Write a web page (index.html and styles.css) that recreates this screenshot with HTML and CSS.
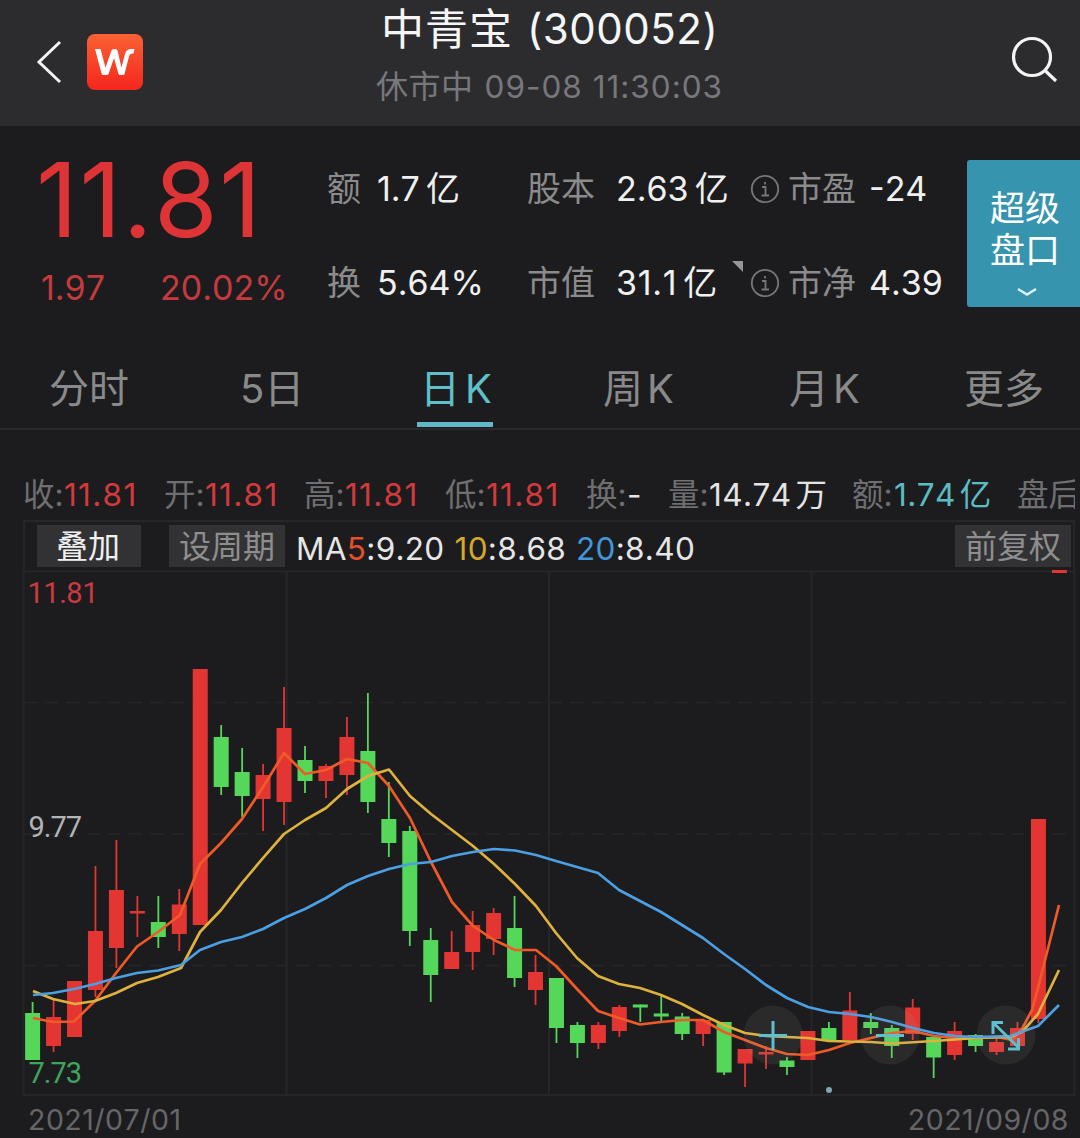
FILE: index.html
```html
<!DOCTYPE html>
<html lang="zh-CN">
<head>
<meta charset="utf-8">
<title>中青宝 (300052)</title>
<link rel="stylesheet" href="styles.css">
</head>
<body>
<header class="topbar">
  <div class="nav">
    <svg class="back" width="28" height="48" viewBox="0 0 28 48"><path d="M25 4 4 24 25 44"/></svg>
    <svg class="logo" width="56" height="56" viewBox="0 0 56 56">
      <defs><linearGradient id="lg" x1="0" y1="0" x2="0" y2="1"><stop offset="0" stop-color="#fb6235"/><stop offset="1" stop-color="#f4261d"/></linearGradient></defs>
      <rect width="56" height="56" rx="8" fill="url(#lg)"/>
      <path d="M8 15H13.500L18.500 33.500 24.500 16.500Q25 15 27 15H28.500Q30 15 30.500 16.500L34.500 33.500 38 20Q39.500 15 44 15H47.500L46.500 19.500Q42.800 19 42 22.500L37.500 40Q37.200 41 36 41H33Q31.800 41 31.500 40L27 24 21.500 40Q21 41 20 41H16Q15 41 14.700 40Z" fill="#fff"/>
    </svg>
  </div>
  <div class="heading">
    <h1 class="title"><span class="title-name">中青宝</span><span class="title-code">(300052)</span></h1>
    <div class="status"><span class="status-name">休市中</span><span class="status-time">09-08 11:30:03</span></div>
  </div>
  <svg class="search" width="48" height="48" viewBox="0 0 48 48"><circle cx="21" cy="22" r="18.500"/><path d="M34 35.500 45 46"/></svg>
</header>

<section class="quote">
  <div class="price-box">
    <div class="price">11.81</div>
    <div class="change"><span class="diff">1.97</span><span class="pct">20.02%</span></div>
  </div>
  <div class="metrics">
    <span class="label">额</span><span class="value">1.7<i>亿</i></span>
    <span class="label">股本</span><span class="value">2.63<i>亿</i></span>
    <svg class="info" width="30" height="30" viewBox="0 0 30 30"><circle cx="15" cy="15" r="13.200"/><path d="M12 13H15.500V21M11.500 21.500H19M15 8V10.500"/></svg>
    <span class="label">市盈</span><span class="value">-24</span>
    <span class="label">换</span><span class="value">5.64%</span>
    <span class="label">市值</span><span class="value corner">31.1<i>亿</i></span>
    <svg class="info" width="30" height="30" viewBox="0 0 30 30"><circle cx="15" cy="15" r="13.200"/><path d="M12 13H15.500V21M11.500 21.500H19M15 8V10.500"/></svg>
    <span class="label">市净</span><span class="value">4.39</span>
  </div>
  <div class="depth">
    <span>超级</span><span>盘口</span>
    <svg width="22" height="12" viewBox="0 0 22 12"><path d="M2 3 11 8.500 20 3"/></svg>
  </div>
</section>

<nav class="tabs">
  <span class="tab">分时</span>
  <span class="tab"><b class="lead">5</b>日</span>
  <span class="tab active">日<b>K</b></span>
  <span class="tab">周<b>K</b></span>
  <span class="tab">月<b>K</b></span>
  <span class="tab">更多</span>
</nav>

<div class="ohlc">
  <span>收<b>:</b><b class="up">11.81</b></span>
  <span>开<b>:</b><b class="up">11.81</b></span>
  <span>高<b>:</b><b class="up">11.81</b></span>
  <span>低<b>:</b><b class="up">11.81</b></span>
  <span>换<b>:</b><b class="plain">-</b></span>
  <span>量<b>:</b><b class="plain">14.74<i>万</i></b></span>
  <span>额<b>:</b><b class="cyan">1.74<i>亿</i></b></span>
  <span>盘后</span>
</div>

<main class="panel">
  <div class="toolbar">
    <span class="chip on">叠加</span>
    <span class="chip">设周期</span>
    <div class="ma">
      <span>MA<b class="ma5">5</b>:9.20</span>
      <span><b class="ma10">10</b>:8.68</span>
      <span><b class="ma20">20</b>:8.40</span>
    </div>
    <span class="chip adj">前复权</span>
  </div>
  <svg class="chart" width="1080" height="530" viewBox="0 568 1080 530">
    <g class="frame">
      <path d="M23.500 568V1095H1074.500V568M23 571.500H1075"/>
      <path d="M286.500 572V1094M549 572V1094M811.500 572V1094"/>
      <path class="dash" d="M24 702.500H1074M24 834H1074M24 965.500H1074"/>
    </g>
    <g id="candles"></g>
    <g class="lines">
      <polyline class="l5" points="33,1018 53,1022 74,1021.500 95,1001 116,973 137,946.500 158,932 180,915 200,864 221,843 242,819 263,787 284,753 305,774 326,770 347,759 368,763 389,786 410,818 431,862 452,902 473,926 494,940 515,950 536,950 556,966 577,989 598,1011 619,1018 640,1024.500 661,1022 682,1020 703,1020 724,1032 745,1040 766,1048 787,1054 808,1055 829,1050 850,1043 871,1038 892,1033 913,1031 934,1036 955,1038 976,1038 997,1037 1012,1040 1022,1029 1032,1010 1038,988 1059,905"/>
      <polyline class="l10" points="33,991 53,999 75,1004 95,1001 116,993 137,983 158,977 181,968 200,932 221,910 242,883 263,858 284,834 305,820 326,808 347,789 368,776 389,769.500 410,796 431,814 452,830 473,846 494,864 515,884 536,906 556,933 577,958 598,976 619,984 640,988 661,995 682,1004 703,1015 724,1025 745,1033 766,1036 787,1037 808,1038 829,1041 871,1042 892,1043.500 934,1041 976,1038 1010,1037 1022,1032 1038,1014 1059,970"/>
      <polyline class="l20" points="33,995 53,993 74,989 95,984 116,978 137,973 158,970.500 181,965 200,950 221,942 242,937 263,929 284,918 305,909 326,898 347,885 368,876 389,869 410,864 431,862 452,856 473,852 494,849 515,850.500 536,855 556,861 577,867 598,873 619,890 640,901 661,912 682,925 703,938 724,954 745,969 766,985 787,998 808,1007 829,1012 850,1014 871,1017 892,1022 913,1028 934,1033 955,1036 976,1037 1010,1036 1038,1026 1059,1005"/>
    </g>
    <g class="controls">
      <circle cx="773" cy="1035" r="29.500"/><circle cx="890" cy="1035" r="29.500"/><circle cx="1006" cy="1035" r="29.500"/>
      <path d="M759 1035.500H787M773 1021V1050M876 1035.500H904"/>
      <path d="M1003 1022.500H993V1034M994 1023.500 1018 1047M1008 1049H1018.500V1038"/>
    </g>
    <circle cx="829" cy="1090" r="3" fill="#7ba9b5"/>
    <text class="axis up" x="27.500" y="602.500" textLength="71">11.81</text>
    <text class="axis" x="28.500" y="837" textLength="53.500">9.77</text>
    <text class="axis low" x="28.500" y="1083" textLength="53.500">7.73</text>
  </svg>
  <div class="dates"><span>2021/07/01</span><span>2021/09/08</span></div>
</main>
<script src="chart.js"></script>
</body>
</html>
```
FILE: styles.css
```css
* { box-sizing: border-box; }
body {
  margin: 0;
  width: 1080px;
  height: 1138px;
  overflow: hidden;
  background: #1c1c1e;
  color: #8a8a8b;
  font-family: Inter, "Noto Sans CJK SC", sans-serif;
  font-kerning: none;
}
b, i, h1 { font-weight: 400; font-style: normal; margin: 0; }
span { white-space: nowrap; }

.topbar {
  display: grid;
  grid-template-columns: 376px 1fr 72px;
  height: 126px;
  background: #2c2c2e;
}
.nav { display: flex; align-items: flex-start; padding: 34px 0 0 35px; gap: 24px; }
.back { margin-top: 4px; fill: none; stroke: #f4f4f4; stroke-width: 3; }
.logo { flex: none; }
.title { display: flex; height: 58px; line-height: 58px; padding-left: 5px; color: #f6f6f6; gap: 14px; }
.title-name { font-size: 43px; letter-spacing: 1px; }
.title-code { font-size: 42px; letter-spacing: .5px; }
.status { display: flex; gap: 11px; height: 58px; line-height: 58px; color: #77777c; }
.status-name { font-size: 32px; letter-spacing: .5px; }
.status-time { font-size: 31.500px; letter-spacing: 1px; }
.search { margin: 35px 0 0 3px; fill: none; stroke: #f4f4f4; stroke-width: 3.200; }

.quote { display: grid; grid-template-columns: 327px 640px 113px; height: 214px; color: #de3435; }
.price-box { padding-left: 36px; }
.price { margin-top: 14px; height: 119px; line-height: 119px; font-size: 103px; letter-spacing: 1.500px; }
.change { display: grid; grid-template-columns: 119px 1fr; height: 56px; line-height: 58px; padding-left: 5px; font-size: 34px; color: #c43a3e; }
.metrics {
  display: grid;
  grid-template-columns: 50px 150px 89px 134px 38px 81px 1fr;
  grid-template-rows: 94px 94px;
  align-items: center;
  padding-top: 16px;
  font-size: 34px;
  line-height: 44px;
}
.label { color: #8b8b8c; }
.value { color: #f0f0f0; }
.value i { margin-left: 6px; }
.corner { position: relative; letter-spacing: .7px; }
.corner::after {
  content: "";
  position: absolute;
  left: 116px;
  top: 0;
  border-top: 11px solid #96969a;
  border-left: 11px solid transparent;
}
.info { fill: none; stroke: #77777a; stroke-width: 1.800; }
.depth {
  display: flex;
  flex-direction: column;
  align-items: center;
  height: 147px;
  margin-top: 34px;
  padding: 27px 0 0 3px;
  border-radius: 3px 0 0 3px;
  background: #3794ae;
  color: #fff;
  font-size: 35px;
  line-height: 42px;
}
.depth svg { margin: 15px 0 0 4px; fill: none; stroke: #d8f3f8; stroke-width: 2.500; }

.tabs {
  display: grid;
  grid-template-columns: 191px 176px 187px 186px 175px 1fr;
  height: 90px;
  padding-left: 49px;
  border-bottom: 2px solid #2a2a2c;
  font-size: 40px;
  line-height: 97px;
}
.tab { height: 87px; }
.tab b { margin-left: 4px; }
.tab .lead { margin: 0; }
.tab.active { color: #5fc0cb; justify-self: start; width: 76px; margin-left: 1px; border-bottom: 5px solid #5fb9c6; text-indent: 3px; }
.tab.active b { display: inline-block; text-indent: 0; margin-left: 5px; line-height: 1; }

.ohlc {
  display: grid;
  grid-template-columns: 141px 140px 141px 141px 82px 184px 165px 58px;
  height: 90px;
  width: 1076px;
  padding-left: 23px;
  overflow: hidden;
  align-items: end;
  font-size: 31.500px;
  line-height: 50px;
  color: #6f6f71;
}
.ohlc span { overflow: hidden; }
.ohlc b { letter-spacing: .4px; }
.ohlc .up { letter-spacing: 1.300px; }
.ohlc i { margin-left: 4px; }
.ohlc .cyan { margin-left: 1px; }
.up { color: #d43a3c; fill: #cc3941; }
.plain { color: #e4e4e4; }
.cyan { color: #5cbcc4; }

.toolbar { display: flex; height: 48px; margin: 0 5px 0 23px; padding: 3px 4px 0 12px; border: 2px solid #262629; border-bottom: 0; }
.chip { height: 42px; line-height: 43px; padding: 0 10px; background: #323234; color: #8e8e8f; font-size: 32px; }
.chip.on { width: 104px; padding: 0 19px; margin-right: 28px; color: #f0f0f0; }
.ma { display: flex; gap: 10px; margin-left: 11px; line-height: 48px; font-size: 31.500px; letter-spacing: .3px; color: #e6e6e6; }
.ma5 { color: #e5502c; }
.ma10 { color: #d5a72c; }
.ma20 { color: #4296dc; }
.adj { margin-left: auto; margin-right: -2px; }

.chart { display: block; }
.frame { fill: none; stroke: #262629; stroke-width: 2; }
.frame .dash { stroke-dasharray: 13 8; stroke-width: 1.500; }
.lines { fill: none; stroke-width: 2.700; stroke-linejoin: round; }
.l5 { stroke: #f05a29; }
.l10 { stroke: #dfb13d; }
.l20 { stroke: #4b9fe3; }
.rise { fill: #e33632; }
.fall { fill: #55d759; }
.controls circle { fill: #aaa; fill-opacity: .1; }
.controls path { fill: none; stroke: #5fbfce; stroke-width: 3; }
.axis { font-family: Roboto, sans-serif; font-size: 29px; fill: #b4b4b5; }
.axis.up { fill: #cc3941; }
.axis.low { fill: #3da65c; }
.dates { display: flex; justify-content: space-between; height: 40px; line-height: 44px; padding: 0 11px 0 28px; font-size: 28.500px; letter-spacing: .5px; color: #666668; }
```
FILE: chart.js
```js
// Each candle: direction, high, body top, body bottom, low (chart y units).
const candles = [
  ['f',1002,1013,1060,1060],['r',1000,1017,1046,1052],['r',981,981,1037,1037],['r',866,931,990,997],
  ['r',840,890,948,968],['r',896,911,913.5,937],['f',896,922,937,948],['r',889,904.5,934,951],
  ['r',669,669,925,925],['f',725,737,787,795],['f',748,772,796,817],['r',764,775,799,831],
  ['r',687,728,802,825],['f',746,760,781,793],['r',764,766,781,798],['r',717,737,775,795],
  ['f',693,751,802,813],['f',782,819,843,857],['f',826,831,931,946],['f',928,940,975,1002],
  ['r',931,952,969,969],['r',911,925,952,970],['r',908,913,939,955],['f',896,928,978,987],
  ['r',955,972,990,1005],['f',978,978,1028,1043],['f',1022,1025,1043,1058],['r',1022,1025,1043,1049],
  ['r',1005,1007,1031,1037],['f',1004.5,1004.5,1007.5,1022],['f',995,1013.5,1016.5,1022],['f',1013,1016.5,1034,1040],
  ['r',1020,1020,1034,1046],['f',1022,1022,1072.5,1075],['r',1049,1049,1063.5,1087],['r',1046,1052,1054.5,1069],
  ['f',1057,1060.5,1067,1075],['r',1031,1031,1060,1060],['f',1022,1028,1041,1041],['r',992,1010.5,1040,1040],
  ['f',1013,1022,1028,1034],['f',1025,1028,1046,1058],['r',999,1007.5,1034,1040],['f',1037,1037,1057.5,1078],
  ['r',1022,1031,1055,1060],['f',1034,1035,1046,1052],['r',1037,1042,1052,1055],['r',1022,1028,1046,1046],
  ['r',819,819,1019,1023],['r',570,570,573,573]
];
const group = document.getElementById('candles');
const rect = (cls, x, y, w, h) => {
  const r = document.createElementNS('http://www.w3.org/2000/svg', 'rect');
  r.setAttribute('class', cls);
  r.setAttribute('x', x);
  r.setAttribute('y', y);
  r.setAttribute('width', w);
  r.setAttribute('height', h);
  group.appendChild(r);
};
candles.forEach(([dir, high, top, bottom, low], i) => {
  const cls = dir === 'r' ? 'rise' : 'fall';
  const x = 32.6 + i * 20.955;
  const wick = low - high > bottom - top;
  if (wick) rect(cls, x - 0.9, high, 1.8, low - high);
  rect(cls, x - 7.5, top, 15, bottom - top);
});
```
